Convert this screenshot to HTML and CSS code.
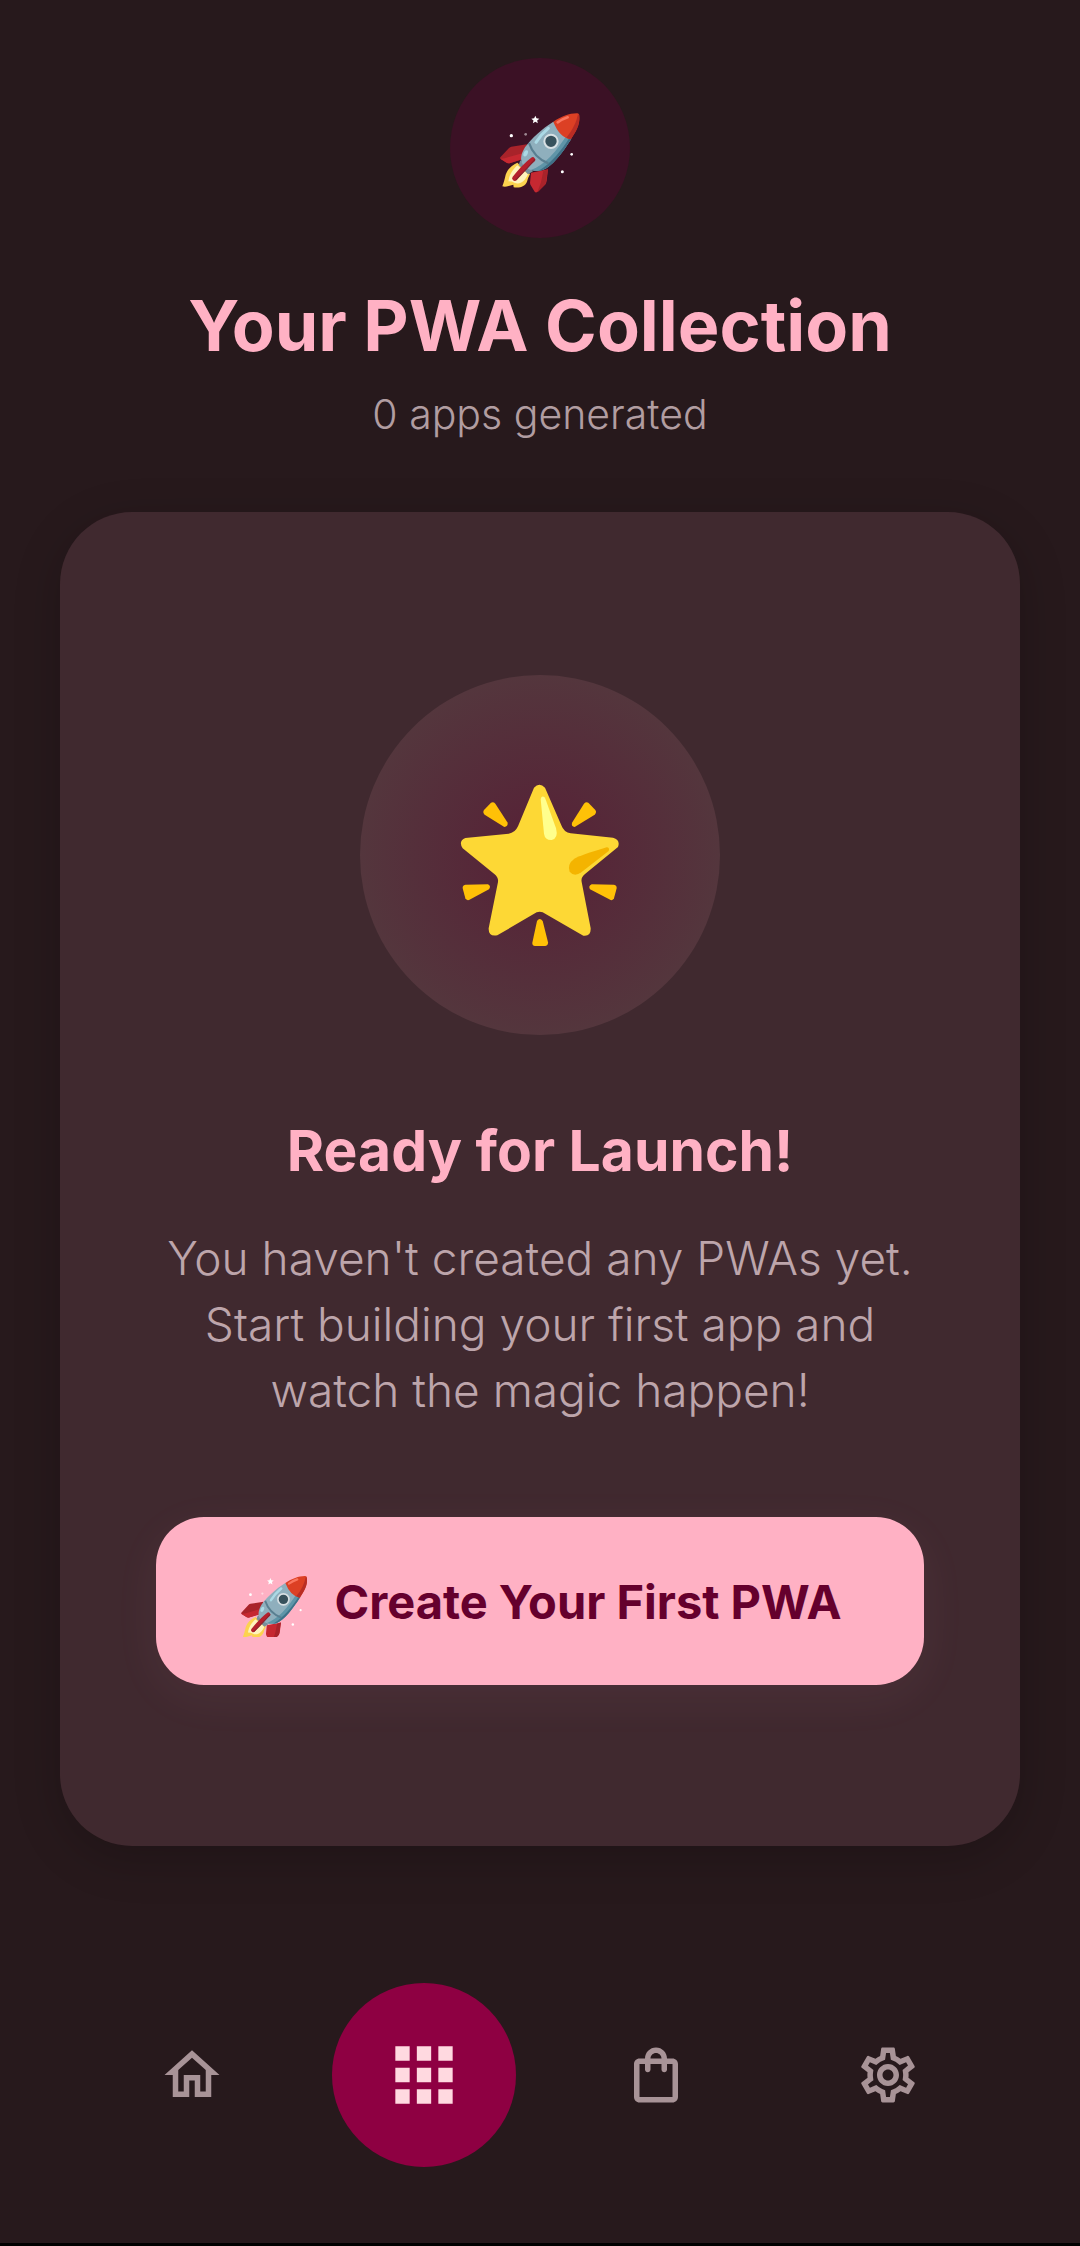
FILE: index.html
```html
<!DOCTYPE html>
<html lang="en">
<head>
<meta charset="utf-8">
<meta name="viewport" content="width=device-width, initial-scale=1">
<title>Your PWA Collection</title>
<link rel="stylesheet" href="styles.css">
</head>
<body>
<svg class="sprite" aria-hidden="true">
  <defs>
    <g id="rocket">
      <path fill="#fff" d="M316 227l3.500 8 8.500 1-6.500 5.500 2 8.500-7.500-4.500-7.500 4.500 2-8.500-6.500-5.500 8.500-1z"/>
      <circle cx="244" cy="287" r="5" fill="#fff"/>
      <circle cx="287" cy="283" r="4" fill="#fff" opacity=".5"/>
      <circle cx="425" cy="343" r="4" fill="#fff"/>
      <circle cx="397" cy="395" r="4.500" fill="#fff"/>
      <path fill="#a8232a" d="M291 313L244 320Q239 321 235 326L211 352Q209 355 213 358L231 369Q234 371 239 370L278 358Z"/>
      <path fill="#c62831" d="M231 369L211 356Q222 357 234 352L277 340 276 358 239 370Z"/>
      <path fill="#c62831" d="M354 388L303 398 300 428Q300 433 304 439L314 455Q317 459 322 456L345 434Q349 429 350 423Z"/>
      <path fill="#a8232a" d="M354 388L340 393 333 427 322 457Q325 456 329 451L347 432Z"/>
      <path fill="#fcd34f" d="M262 368C244 376 232 389 227 404C224 418 221 428 217 439Q225 442 236 438L250 434 251 442C271 445 286 438 291 425Q294 413 300 402Z"/>
      <path fill="#fff3bd" d="M262 376C249 389 239 401 235 424Q247 424 253 428C270 435 284 425 294 403Z"/>
      <path fill="#78909c" d="M271 361L266 375 294 403 309 394Z"/>
      <path fill="#8fafbd" d="M370 245C337 265 305 295 285 322C273 341 269 361 279 374C291 390 316 396 338 390C362 382 393 343 424 296Z"/>
      <path fill="#5f95a8" d="M411 284L424 296C397 339 368 378 338 390Q321 395 302 390C342 377 382 331 411 284Z"/>
      <path fill="#3f7188" d="M419 292L424 296C397 339 368 378 338 390L326 392C363 371 397 329 419 292Z"/>
      <path fill="none" stroke="#597f91" stroke-width="7" d="M297 309C306 336 324 358 355 370"/>
      <path fill="none" stroke="#abd9e5" stroke-width="9" stroke-linecap="round" d="M355 265Q333 283 318 307"/>
      <ellipse cx="287" cy="340" rx="6" ry="10" fill="#abd9e5" transform="rotate(25 287 340)"/>
      <path fill="#dc4024" d="M370 245C393 230 418 220 440 220Q448 219 448 228C450 252 438 275 422 298Q388 292 370 245Z"/>
      <path fill="#b92d24" d="M444 222Q449 224 448 233C450 255 437 277 422 298L409 293C428 270 439 247 444 222Z"/>
      <path fill="none" stroke="#fa755e" stroke-width="8" stroke-linecap="round" d="M383 247Q398 237 413 232"/>
      <circle cx="363" cy="304" r="20" fill="#37515c" stroke="#d8e0e4" stroke-width="6"/>
      <path fill="none" stroke="#b5202c" stroke-width="15" stroke-linecap="round" d="M308 359Q284 377 254 415"/>
      <path fill="none" stroke="#8c202c" stroke-width="4" stroke-linecap="round" d="M314 359Q294 383 258 419"/>
    </g>
  </defs>
</svg>
<div class="screen">
  <header class="intro">
    <div class="badge">
      <svg class="badge-rocket" viewBox="186 180 288 288" aria-hidden="true"><use href="#rocket"/></svg>
    </div>
    <h1 class="title">Your PWA Collection</h1>
    <p class="subtitle">0 apps generated</p>
  </header>
  <main class="card">
    <div class="halo">
      <svg class="star" viewBox="0 -15 600 600" aria-hidden="true">
        <path fill="#fdd835" d="M282 83Q298 65 315 83L364 196Q372 218 392 220L519 233Q542 240 534 261L435 342Q422 352 425 366L452 505Q453 530 430 527L317 462Q299 448 281 462L172 526Q145 531 146 505L174 366Q176 352 163 342L68 265Q54 243 76 234L206 221Q225 219 234 199Z"/>
        <path fill="#ffff8d" d="M302 117Q305 105 315 113L348 205Q356 235 335 240Q315 241 312 221Z"/>
        <path fill="#f4b400" d="M500 262Q510 263 506 273L424 337Q403 352 389 335Q381 312 403 296Q421 286 500 262Z"/>
        <g fill="#ffc107">
          <path d="M132 150L153 128Q160 124 166 131L203 188Q204 199 193 201L134 164Q127 157 132 150Z"/>
          <path d="M466 150L445 128Q438 124 432 131L396 188Q393 199 404 201L464 164Q471 157 466 150Z"/>
          <path d="M76 374L144 373Q154 378 147 388L87 420Q79 422 76 415L68 385Q67 376 76 374Z"/>
          <path d="M522 374L455 373Q444 378 450 388L512 420Q519 422 522 415L530 385Q531 376 522 374Z"/>
          <path d="M291 483Q299 471 308 483L324 547Q325 556 316 558L285 558Q276 557 277 548Z"/>
        </g>
      </svg>
    </div>
    <h2 class="card-title">Ready for Launch!</h2>
    <p class="card-text">You haven't created any PWAs yet. Start building your first app and watch the magic happen!</p>
    <button class="cta" type="button">
      <svg class="cta-rocket" viewBox="199 180 260 260" aria-hidden="true"><use href="#rocket"/></svg>
      <span>Create Your First PWA</span>
    </button>
  </main>
  <nav class="tabs" aria-label="Main">
    <a class="tab" href="#home" aria-label="Home">
      <svg class="tab-icon" viewBox="0 0 24 24"><path d="M12 5.690l5 4.500V18h-2v-6H9v6H7v-7.810l5-4.500M12 3L2 12h3v8h6v-6h2v6h6v-8h3L12 3z"/></svg>
    </a>
    <a class="tab tab-active" href="#apps" aria-label="Apps" aria-current="page">
      <svg class="tab-icon" viewBox="0 0 24 24"><path d="M4 8h4V4H4v4zm6 12h4v-4h-4v4zm-6 0h4v-4H4v4zm0-6h4v-4H4v4zm6 0h4v-4h-4v4zm6-10v4h4V4h-4zm-6 4h4V4h-4v4zm6 6h4v-4h-4v4zm0 6h4v-4h-4v4z"/></svg>
    </a>
    <a class="tab" href="#store" aria-label="Store">
      <svg class="tab-icon" viewBox="0 0 24 24"><path d="M18 6h-2c0-2.210-1.790-4-4-4S8 3.790 8 6H6c-1.100 0-2 .9-2 2v12c0 1.100.9 2 2 2h12c1.100 0 2-.9 2-2V8c0-1.100-.9-2-2-2zm-6-2c1.100 0 2 .9 2 2h-4c0-1.100.9-2 2-2zm6 16H6V8h2v2c0 .55.45 1 1 1s1-.45 1-1V8h4v2c0 .55.45 1 1 1s1-.45 1-1V8h2v12z"/></svg>
    </a>
    <a class="tab" href="#settings" aria-label="Settings">
      <svg class="tab-icon" viewBox="0 0 24 24"><path d="M19.430 12.980c.04-.32.07-.64.07-.98 0-.34-.03-.66-.07-.98l2.110-1.650c.19-.15.24-.42.12-.64l-2-3.460c-.09-.16-.26-.25-.44-.25-.06 0-.12.01-.17.03l-2.490 1c-.52-.4-1.080-.73-1.690-.98l-.38-2.650C14.460 2.180 14.250 2 14 2h-4c-.25 0-.46.18-.49.42l-.38 2.650c-.61.25-1.170.59-1.690.98l-2.490-1c-.06-.02-.12-.03-.18-.03-.17 0-.34.09-.43.25l-2 3.460c-.13.22-.07.49.12.64l2.110 1.650c-.04.32-.07.65-.07.98 0 .33.03.66.07.98l-2.110 1.650c-.19.15-.24.42-.12.64l2 3.460c.09.16.26.25.44.25.06 0 .12-.01.17-.03l2.490-1c.52.4 1.080.73 1.690.98l.38 2.650c.03.24.24.42.49.42h4c.25 0 .46-.18.49-.42l.38-2.650c.61-.25 1.170-.59 1.690-.98l2.490 1c.06.02.12.03.18.03.17 0 .34-.09.43-.25l2-3.460c.12-.22.07-.49-.12-.64l-2.110-1.650zm-1.980-1.710c.04.31.05.52.05.73 0 .21-.02.43-.05.73l-.14 1.130.89.7 1.080.84-.7 1.210-1.270-.51-1.040-.42-.9.68c-.43.32-.84.56-1.250.73l-1.060.43-.16 1.130-.2 1.350h-1.400l-.19-1.350-.16-1.130-1.060-.43c-.43-.18-.83-.41-1.230-.71l-.91-.7-1.060.43-1.270.51-.7-1.210 1.080-.84.89-.7-.14-1.130c-.03-.31-.05-.54-.05-.74s.02-.43.05-.73l.14-1.130-.89-.7-1.080-.84.7-1.210 1.270.51 1.040.42.9-.68c.43-.32.84-.56 1.250-.73l1.060-.43.16-1.130.2-1.350h1.390l.19 1.350.16 1.130 1.060.43c.43.18.83.41 1.230.71l.91.7 1.060-.43 1.270-.51.7 1.210-1.070.85-.89.7.14 1.130zM12 8c-2.210 0-4 1.790-4 4s1.790 4 4 4 4-1.790 4-4-1.790-4-4-4zm0 6c-1.100 0-2-.9-2-2s.9-2 2-2 2 .9 2 2-.9 2-2 2z"/></svg>
    </a>
  </nav>
</div>
</body>
</html>
```
FILE: styles.css
```css
* {
  box-sizing: border-box;
}

body {
  margin: 0;
  background: #27191c;
  font-family: Inter, "Liberation Sans", sans-serif;
}

h1,
h2,
p {
  margin: 0;
}

.sprite {
  display: none;
}

.screen {
  display: flex;
  flex-direction: column;
  min-height: 100vh;
  border-bottom: 3px solid #000;
}

.intro {
  display: flex;
  flex-direction: column;
  align-items: center;
  padding: 58px 60px 0;
  text-align: center;
}

.badge {
  display: grid;
  place-items: center;
  width: 180px;
  height: 180px;
  border-radius: 50%;
  background: #3b1125;
}

.badge-rocket {
  width: 96px;
  height: 96px;
}

.title {
  margin-top: 44px;
  color: #ffb1c4;
  font-size: 70px;
  font-weight: 700;
  line-height: 88px;
}

.subtitle {
  margin-top: 16px;
  color: #b19da1;
  font-size: 41px;
  font-weight: 300;
  line-height: 56px;
}

.card {
  display: flex;
  flex-direction: column;
  align-items: center;
  margin: 70px 60px 0;
  padding: 163px 96px 161px;
  border-radius: 72px;
  background: #40292f;
  box-shadow: 0 12px 48px rgba(0, 0, 0, 0.2);
  text-align: center;
}

.halo {
  display: grid;
  place-items: center;
  width: 360px;
  height: 360px;
  border-radius: 50%;
  background: radial-gradient(circle closest-side, #572036, #54363d);
}

.star {
  width: 200px;
  height: 200px;
}

.card-title {
  margin-top: 80px;
  color: #ffb1c4;
  font-size: 57px;
  font-weight: 700;
  line-height: 72px;
}

.card-text {
  margin-top: 38px;
  color: #bda5ab;
  font-size: 46px;
  font-weight: 300;
  line-height: 66px;
}

.cta {
  display: flex;
  align-items: center;
  justify-content: center;
  gap: 24px;
  width: 100%;
  height: 168px;
  margin-top: 94px;
  padding: 0;
  border: 0;
  border-radius: 48px;
  background: #ffb1c4;
  box-shadow: 0 12px 48px rgba(255, 177, 196, 0.06);
  color: #65002d;
  font: inherit;
  font-size: 47px;
  font-weight: 700;
  white-space: nowrap;
}

.cta-rocket {
  width: 72px;
  height: 72px;
}

.tabs {
  display: flex;
  justify-content: space-around;
  margin-top: auto;
  padding: 0 76px 76px;
}

.tab {
  display: grid;
  place-items: center;
  width: 184px;
  height: 184px;
  border-radius: 50%;
  color: #a89397;
}

.tab-icon {
  width: 66px;
  height: 66px;
  fill: currentColor;
}

.tab-active {
  background: #8e0042;
  color: #ffd9e0;
}

.tab-active .tab-icon {
  width: 86px;
  height: 86px;
}
```
